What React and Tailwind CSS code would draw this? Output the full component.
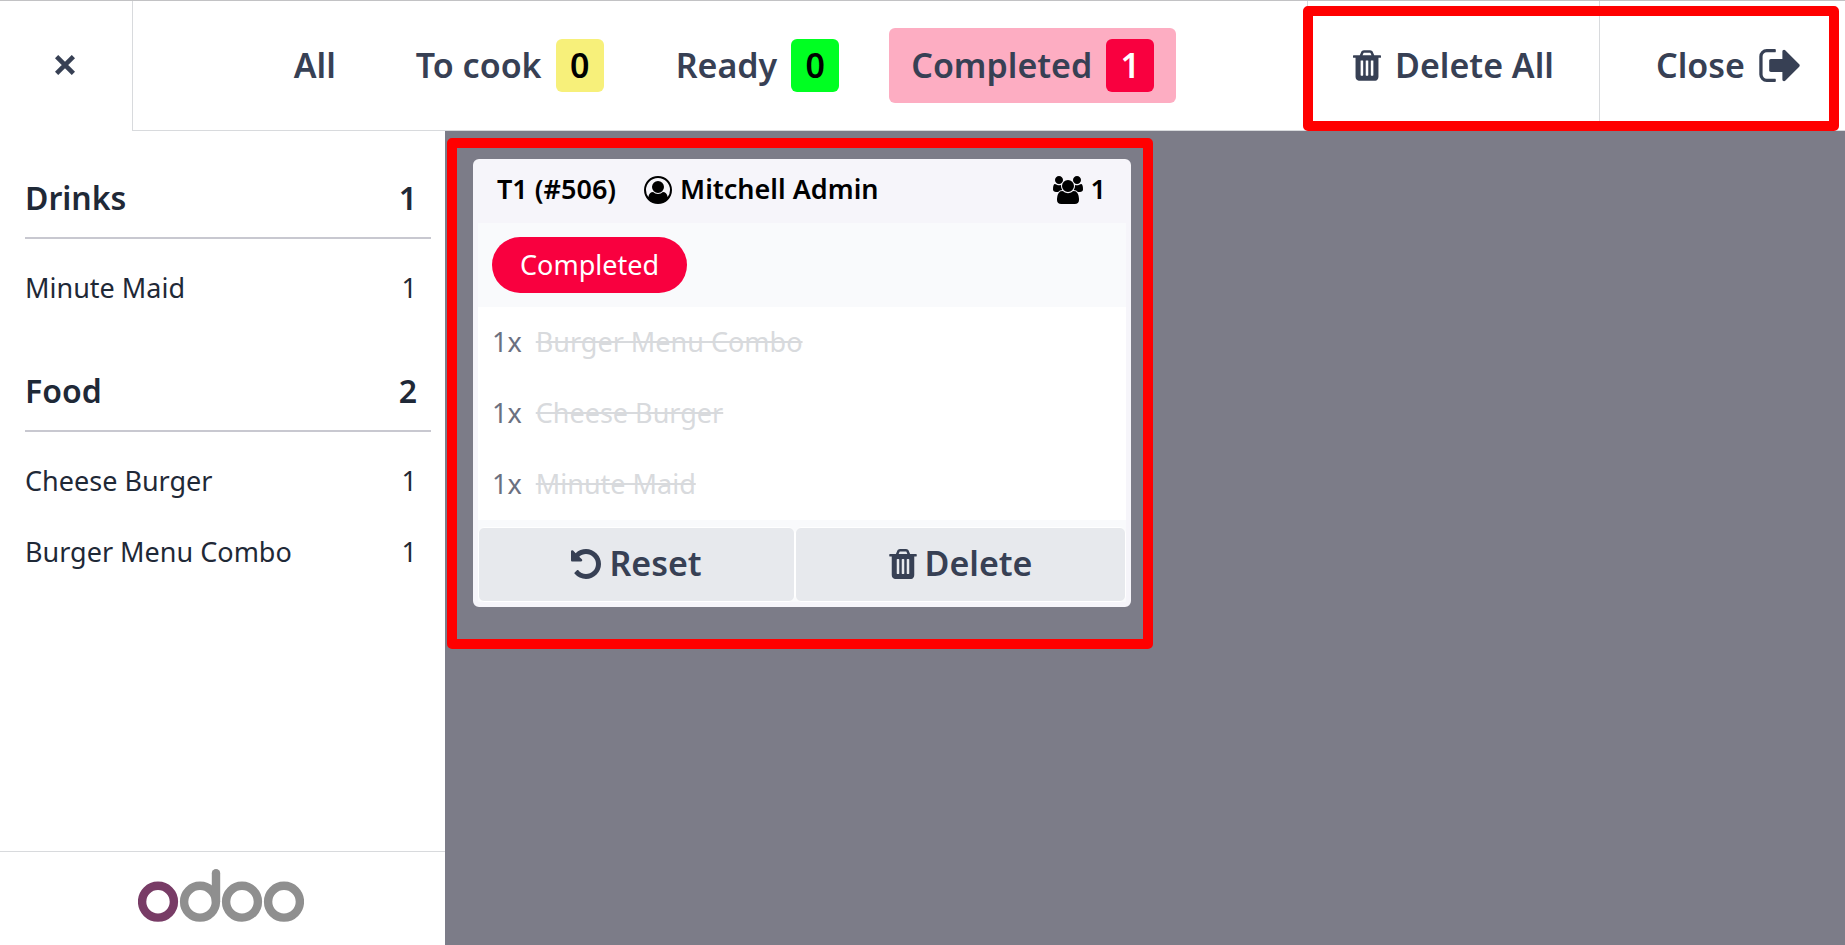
import React from "react";

const paths = {
  trash: {
    box: "192 128 1408 1536",
    d: "M704 1376v-704q0-14-9-23t-23-9h-64q-14 0-23 9t-9 23v704q0 14 9 23t23 9h64q14 0 23-9t9-23zm256 0v-704q0-14-9-23t-23-9h-64q-14 0-23 9t-9 23v704q0 14 9 23t23 9h64q14 0 23-9t9-23zm256 0v-704q0-14-9-23t-23-9h-64q-14 0-23 9t-9 23v704q0 14 9 23t23 9h64q14 0 23-9t9-23zm-544-992h448l-48-117q-7-9-17-11h-317q-10 2-17 11zm928 32v64q0 14-9 23t-23 9h-96v948q0 83-47 143.5t-113 60.5h-832q-66 0-113-58.5t-47-141.5v-952h-96q-14 0-23-9t-9-23v-64q0-14 9-23t23-9h309l70-167q15-37 54-63t79-26h320q40 0 79 26t54 63l70 167h309q14 0 23 9t9 23z",
  },
  signOut: {
    box: "64 256 1568 1280",
    d: "M704 1440q0 4 1 20t.5 26.5-3 23.5-10 19.5-20.5 6.5h-320q-119 0-203.5-84.5t-84.5-203.5v-704q0-119 84.5-203.5t203.5-84.5h320q13 0 22.5 9.5t9.5 22.5q0 4 1 20t.5 26.5-3 23.5-10 19.5-20.5 6.5h-320q-66 0-113 47t-47 113v704q0 66 47 113t113 47h312l11.5 1 11.5 3 8 5.5 7 9 2 13.5zm928-544q0 26-19 45l-544 544q-19 19-45 19t-45-19-19-45v-288h-448q-26 0-45-19t-19-45v-384q0-26 19-45t45-19h448v-288q0-26 19-45t45-19 45 19l544 544q19 19 19 45z",
  },
  undo: {
    box: "128 128 1536 1536",
    d: "M1664 896q0 156-61 298t-164 245-245 164-298 61q-172 0-327-72.5t-264-204.5q-7-10-6.5-22.5t8.5-20.5l137-138q10-9 25-9 16 2 23 12 73 95 179 147t225 52q104 0 198.5-40.5t163.5-109.5 109.5-163.5 40.5-198.5-40.5-198.5-109.5-163.5-163.5-109.5-198.5-40.5q-98 0-188 35.5t-160 101.5l137 138q31 30 14 69-17 40-59 40h-448q-26 0-45-19t-19-45v-448q0-42 40-59 39-17 69 14l130 129q107-101 244.5-156.5t284.5-55.5q156 0 298 61t245 164 164 245 61 298z",
  },
  user: {
    box: "0 0 1792 1792",
    d: "M896 0q182 0 348 71t286 191 191 286 71 348q0 181-70.5 347t-190.5 286-286 191.5-349 71.5-349-71-285.5-191.5-190.5-286-71-347.5 71-348 191-286 286-191 348-71zm619 1351q149-205 149-455 0-156-61-298t-164-245-245-164-298-61-298 61-245 164-164 245-61 298q0 250 149 455 66-327 306-327 131 128 313 128t313-128q240 0 306 327zm-235-647q0-159-112.5-271.5t-271.5-112.5-271.5 112.5-112.5 271.5 112.5 271.5 271.5 112.5 271.5-112.5 112.5-271.5z",
  },
  users: {
    box: "0 0 1920 1792",
    d: "M593 896q-162 5-265 128h-134q-82 0-138-40.5t-56-118.5q0-353 124-353 6 0 43.5 21t97.5 42.5 119 21.5q67 0 133-23-5 37-5 66 0 139 81 256zm1071 637q0 120-73 189.5t-194 69.5h-874q-121 0-194-69.5t-73-189.5q0-53 3.5-103.5t14-109 26.5-108.5 43-97.5 62-81 85.5-53.5 111.5-20q10 0 43 21.5t73 48 107 48 135 21.5 135-21.5 107-48 73-48 43-21.5q61 0 111.5 20t85.5 53.5 62 81 43 97.5 26.5 108.5 14 109 3.5 103.5zm-1024-1277q0 106-75 181t-181 75-181-75-75-181 75-181 181-75 181 75 75 181zm704 384q0 159-112.5 271.5t-271.5 112.5-271.5-112.5-112.5-271.5 112.5-271.5 271.5-112.5 271.5 112.5 112.5 271.5zm576 225q0 78-56 118.5t-138 40.5h-134q-103-123-265-128 81-117 81-256 0-29-5-66 66 23 133 23 59 0 119-21.5t97.5-42.5 43.5-21q124 0 124 353zm-128-609q0 106-75 181t-181 75-181-75-75-181 75-181 181-75 181 75 75 181z",
  },
};

function Icon({ name, className }) {
  return (
    <svg viewBox={paths[name].box} className={className} fill="currentColor" aria-hidden="true">
      <path d={paths[name].d} />
    </svg>
  );
}

const stages = [
  { label: "All" },
  { label: "To cook", count: 0, badge: "bg-[#f7f07a] text-black" },
  { label: "Ready", count: 0, badge: "bg-[#00ff22] text-black" },
  { label: "Completed", count: 1, badge: "bg-[#f9003f] text-white", active: true },
];

const categories = [
  { name: "Drinks", count: 1, items: [["Minute Maid", 1]] },
  { name: "Food", count: 2, items: [["Cheese Burger", 1], ["Burger Menu Combo", 1]] },
];

const lines = ["Burger Menu Combo", "Cheese Burger", "Minute Maid"];

function Highlight({ className }) {
  return (
    <div className={`pointer-events-none absolute rounded-[5px] border-10 border-[#ff0000] ${className}`} />
  );
}

function Header() {
  return (
    <header className="flex h-[131px] shrink-0 border-t border-[#c2c2c4] text-[34px] font-semibold text-[#374054]">
      <button aria-label="Exit" className="flex w-[132px] shrink-0 items-center justify-center pr-0.5 pb-0.5">
        <svg viewBox="0 0 20 20" className="size-5" fill="none" stroke="currentColor" strokeWidth="4.6" aria-hidden="true">
          <path d="M1.6 1.6 18.4 18.4M18.4 1.6 1.6 18.4" />
        </svg>
      </button>
      <div className="flex grow border-b border-l border-[#d8dadd]">
        <nav className="flex grow items-center justify-center gap-7 pl-2">
          {stages.map((s) => (
            <button
              key={s.label}
              className={`flex h-[75px] items-center gap-[14px] rounded-md px-[22px] whitespace-nowrap first:mr-2 ${s.active ? "bg-[#fdadc2]" : ""}`}
            >
              {s.label}
              {s.badge && (
                <span className={`flex h-[53px] w-12 items-center justify-center rounded-md ${s.badge}`}>{s.count}</span>
              )}
            </button>
          ))}
        </nav>
        <div className="relative flex shrink-0">
          <button className="flex w-[292px] items-center justify-center gap-[14px] border-l border-[#d8dadd] whitespace-nowrap">
            <Icon name="trash" className="h-[31px] w-7" />
            Delete All
          </button>
          <button className="flex w-[246px] items-center justify-end gap-[14px] border-l border-[#d8dadd] pr-[45px] whitespace-nowrap">
            Close
            <Icon name="signOut" className="h-[33px] w-[41px]" />
          </button>
          <Highlight className="-left-1 top-[5px] right-[6px] -bottom-px" />
        </div>
      </div>
    </header>
  );
}

function Logo() {
  return (
    <svg viewBox="0 0 166 53" className="h-[53px] w-[166px]" fill="none" strokeWidth="8.4" role="img" aria-label="odoo">
      <circle cx="20" cy="32.7" r="15.9" stroke="#783c66" />
      <g stroke="#8f8f8f">
        <circle cx="62" cy="32.7" r="15.9" />
        <path d="M78 32.7V4.2" strokeLinecap="round" />
        <circle cx="104" cy="32.7" r="15.9" />
        <circle cx="146" cy="32.7" r="15.9" />
      </g>
    </svg>
  );
}

function Sidebar() {
  return (
    <aside className="flex w-[445px] shrink-0 flex-col bg-white text-[#1f2937]">
      <div className="flex grow flex-col gap-[43px] pt-[43px] pr-[14px] pl-[25px]">
        {categories.map((c) => (
          <section key={c.name}>
            <h2 className="flex justify-between border-b-2 border-[#c8c8d0] pr-[14px] pb-[15px] text-[32px] leading-[48px] font-semibold">
              <span>{c.name}</span>
              <span>{c.count}</span>
            </h2>
            <ul className="pt-[14px] text-[27px]">
              {c.items.map(([name, n]) => (
                <li key={name} className="flex h-[71px] items-center justify-between pr-[14px]">
                  <span>{name}</span>
                  <span>{n}</span>
                </li>
              ))}
            </ul>
          </section>
        ))}
      </div>
      <footer className="flex h-[94px] items-center justify-center border-t border-[#d8dadd] pr-1 pb-1.5">
        <Logo />
      </footer>
    </aside>
  );
}

function OrderCard() {
  return (
    <article className="w-[658px] rounded-md border-5 border-[#f6f5fa] bg-[#f9fafc] text-[27px]">
      <header className="flex h-[59px] items-center bg-[#f6f5fa] pr-5 pb-2 pl-[19px] font-semibold text-black">
        <span>T1 (#506)</span>
        <span className="ml-7 flex items-center gap-2">
          <Icon name="user" className="size-7" />
          Mitchell Admin
        </span>
        <span className="ml-auto flex items-center gap-2">
          <Icon name="users" className="h-7 w-[30px]" />1
        </span>
      </header>
      <div className="flex h-[84px] items-center px-[14px]">
        <span className="flex h-14 items-center rounded-full bg-[#f9003f] px-7 text-white">Completed</span>
      </div>
      <ul className="bg-white">
        {lines.map((name) => (
          <li key={name} className="flex h-[71px] items-center gap-[14px] px-[14px]">
            <span className="text-[#6b7080]">1x</span>
            <span className="text-[#d8dadd] line-through">{name}</span>
          </li>
        ))}
      </ul>
      <div className="flex pt-[7px] text-[34px] font-semibold text-[#374054]">
        <button className="flex h-[75px] w-[317px] items-center justify-center gap-2 rounded-md border border-white bg-[#e7e9ed] pb-0.5">
          <Icon name="undo" className="size-[30px]" />
          Reset
        </button>
        <button className="flex h-[75px] grow items-center justify-center gap-2 rounded-md border border-white bg-[#e7e9ed] pb-0.5">
          <Icon name="trash" className="h-[30px] w-7" />
          Delete
        </button>
      </div>
    </article>
  );
}

export default function App() {
  return (
    <div className="flex min-h-screen flex-col bg-white font-['Noto_Sans',sans-serif]">
      <Header />
      <div className="flex grow">
        <Sidebar />
        <main className="flex grow items-start bg-[#7c7c88] px-[2px] pt-[7px]">
          <div className="relative px-[26px] pt-[21px] pb-[42px]">
            <OrderCard />
            <Highlight className="top-0 right-[4px] bottom-0 left-0" />
          </div>
        </main>
      </div>
    </div>
  );
}
